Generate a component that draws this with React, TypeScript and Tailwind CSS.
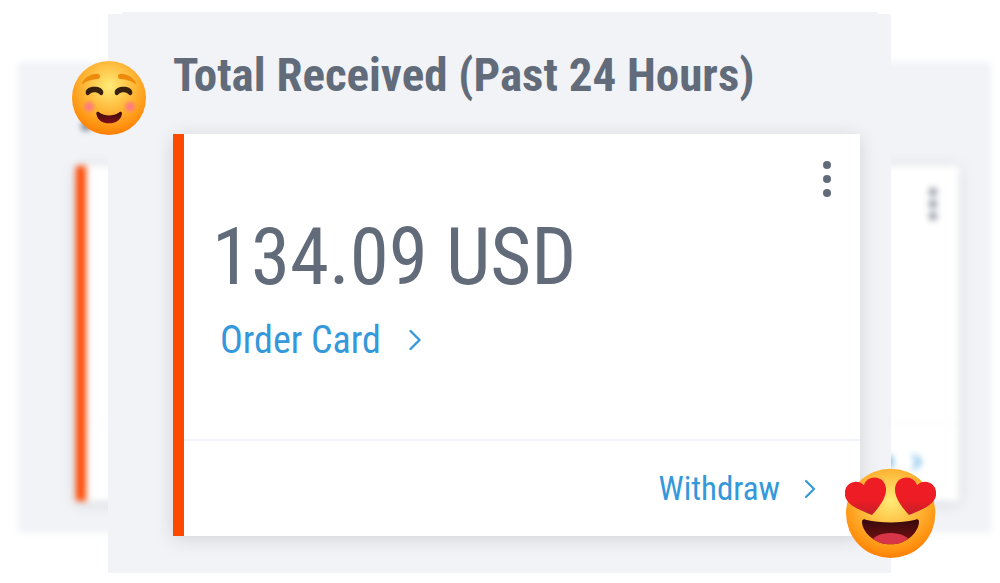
import React from 'react';
import { ChevronRight } from 'lucide-react';

const BlushEmoji = () => (
  <svg viewBox="36 33 222 222" className="h-[74px] w-[74px]" role="img" aria-label="Smiling face">
    <defs>
      <radialGradient id="blush-face" cx="148" cy="108" r="145" gradientUnits="userSpaceOnUse">
        <stop offset="0" stopColor="#ffec78" />
        <stop offset="0.5" stopColor="#feb93a" />
        <stop offset="0.85" stopColor="#ff9412" />
        <stop offset="1" stopColor="#ff7f06" />
      </radialGradient>
      <radialGradient id="blush-cheek">
        <stop offset="0" stopColor="#ff7392" stopOpacity="0.95" />
        <stop offset="0.5" stopColor="#ff7b7d" stopOpacity="0.65" />
        <stop offset="1" stopColor="#ff9a50" stopOpacity="0" />
      </radialGradient>
      <linearGradient id="blush-mouth" x1="0" y1="0" x2="0" y2="1">
        <stop offset="0" stopColor="#3a0a0a" />
        <stop offset="1" stopColor="#82101a" />
      </linearGradient>
    </defs>
    <circle cx="147" cy="144" r="111" fill="url(#blush-face)" />
    <circle cx="87" cy="170" r="23" fill="url(#blush-cheek)" />
    <circle cx="210" cy="170" r="23" fill="url(#blush-cheek)" />
    <path d="M66 100C71 84 91 71 112 71c10 0 11 15 1 16-18 1-33 6-44 14q-4 2-3-1z" fill="#ed8a0c" />
    <path d="M228 100C223 84 203 71 182 71c-10 0-11 15-1 16 18 1 33 6 44 14q4 2 3-1z" fill="#ed8a0c" />
    <path d="M77 127c1-22 52-22 53 0 0 10-8 11-12 5-8-7-21-7-29 0-4 6-12 5-12-5z" fill="#38200f" />
    <path d="M164 127c1-22 52-22 53 0 0 10-8 11-12 5-8-7-21-7-29 0-4 6-12 5-12-5z" fill="#38200f" />
    <path d="M109 191c0-6 5-7 10-3 16 11 40 11 57 0 5-4 10-3 10 3-3 19-19 29-39 29s-35-10-38-29z" fill="url(#blush-mouth)" />
  </svg>
);

const HeartEyesEmoji = () => (
  <svg viewBox="45 54 273 273" className="h-[91px] w-[91px]" role="img" aria-label="Smiling face with heart eyes">
    <defs>
      <radialGradient id="heart-face" cx="182" cy="152" r="172" gradientUnits="userSpaceOnUse">
        <stop offset="0" stopColor="#ffec78" />
        <stop offset="0.5" stopColor="#feb93a" />
        <stop offset="0.85" stopColor="#ff9412" />
        <stop offset="1" stopColor="#ff7f06" />
      </radialGradient>
      <linearGradient id="heart-eye" x1="0" y1="0" x2="0" y2="1">
        <stop offset="0.6" stopColor="#ee1c25" />
        <stop offset="1" stopColor="#c51f2b" />
      </linearGradient>
      <linearGradient id="heart-mouth" x1="0" y1="0" x2="0" y2="1">
        <stop offset="0" stopColor="#350a0a" />
        <stop offset="1" stopColor="#7c1014" />
      </linearGradient>
      <clipPath id="heart-mouth-clip">
        <path d="M96 215c0-6 5-9 11-6 47 11 103 11 149 0 7-3 11 0 11 6 0 29-35 68-85 68s-86-39-86-68z" />
      </clipPath>
    </defs>
    <circle cx="182" cy="190" r="134" fill="url(#heart-face)" />
    <path d="M126 195C94 182 51 166 45 137c-5-37 34-54 57-31 7-31 61-34 66 9 2 29-23 59-42 80z" fill="url(#heart-eye)" />
    <path d="M237 195C269 182 312 166 318 137c5-37-34-54-57-31-7-31-61-34-66 9-2 29 23 59 42 80z" fill="url(#heart-eye)" />
    <path d="M96 215c0-6 5-9 11-6 47 11 103 11 149 0 7-3 11 0 11 6 0 29-35 68-85 68s-86-39-86-68z" fill="url(#heart-mouth)" />
    <ellipse cx="182" cy="278" rx="57" ry="29" fill="#d83648" clipPath="url(#heart-mouth-clip)" />
  </svg>
);

// Out-of-focus copy of the widget that sits behind the main panel
const Backdrop = () => (
  <div
    aria-hidden="true"
    className="col-start-1 row-start-1 mr-[9px] ml-[18px] mt-[62px] mb-[50px] flex flex-col rounded-sm bg-[#f1f3f7] pt-[60px] pr-8 pb-8 pl-[58px] blur-[3px]"
  >
    <div className="ml-[6px] h-2 w-2 bg-[#626b7a]" />
    <div className="mt-9 flex flex-1 flex-col border-l-[10px] border-[#ff4800] bg-white shadow-[0_2px_14px_rgba(0,0,0,0.12)]">
      <div className="flex flex-1 flex-col items-end gap-1 border-b border-[#f3f4fa] pt-[22px] pr-[22px]">
        <div className="h-2 w-2 rounded-full bg-[#8b929d]" />
        <div className="h-2 w-2 rounded-full bg-[#8b929d]" />
        <div className="h-2 w-2 rounded-full bg-[#8b929d]" />
      </div>
      <div className="flex h-[78px] items-center justify-end gap-3 pr-[30px]">
        <div className="h-3 w-3 bg-[#7fbde8]" />
        <ChevronRight className="h-6 w-6 text-[#5baee3]" strokeWidth={3} />
      </div>
    </div>
  </div>
);

const Widget = () => (
  <section className="flex flex-1 flex-col bg-[#f1f3f7] pt-[33px] pr-[31px] pb-[37px] pl-[65px]">
    <h1 className="text-[47px] leading-[56px] font-bold whitespace-nowrap">Total Received (Past 24 Hours)</h1>
    <div className="mt-[31px] flex flex-1 flex-col border-l-[11px] border-[#ff4800] bg-white shadow-[0_3px_18px_rgba(0,0,0,0.13)]">
      <div className="flex flex-1 justify-between border-b-2 border-[#f3f4fa] pr-6 pl-7">
        <div className="flex flex-col items-start pt-[77px]">
          <p className="text-[79px] leading-[92px] whitespace-nowrap">134.09 USD</p>
          <a href="#order-card" className="mt-[15px] ml-2 flex items-center gap-4 text-[38px] leading-[44px] text-[#3498db]">
            Order Card
            <ChevronRight className="h-9 w-9" strokeWidth={1.6} />
          </a>
        </div>
        <button type="button" aria-label="More options" className="mt-[27px] flex w-[18px] flex-col items-center gap-[6px] self-start">
          <span className="h-2 w-2 rounded-full bg-[#626b7a]" />
          <span className="h-2 w-2 rounded-full bg-[#626b7a]" />
          <span className="h-2 w-2 rounded-full bg-[#626b7a]" />
        </button>
      </div>
      <div className="flex h-[95px] items-center justify-end pr-[34px]">
        <a href="#withdraw" className="flex items-center gap-[14px] text-[33px] leading-10 text-[#3498db]">
          Withdraw
          <ChevronRight className="h-8 w-8" strokeWidth={1.6} />
        </a>
      </div>
    </div>
  </section>
);

const App = () => {
  return (
    <main className="relative grid min-h-screen overflow-hidden bg-white font-['Roboto_Condensed','Liberation_Sans_Narrow',Roboto,sans-serif] text-[#626b7a]">
      <Backdrop />
      <div className="relative z-10 col-start-1 row-start-1 mt-3 mr-[109px] mb-[10px] ml-[108px] flex flex-col">
        <div className="mx-[14px] h-0.5 bg-[#f1f3f7]" />
        <Widget />
        <div className="absolute top-[49px] -left-9">
          <BlushEmoji />
        </div>
        <div className="absolute -right-[45px] bottom-[14px]">
          <HeartEyesEmoji />
        </div>
      </div>
    </main>
  );
};

export default App;
